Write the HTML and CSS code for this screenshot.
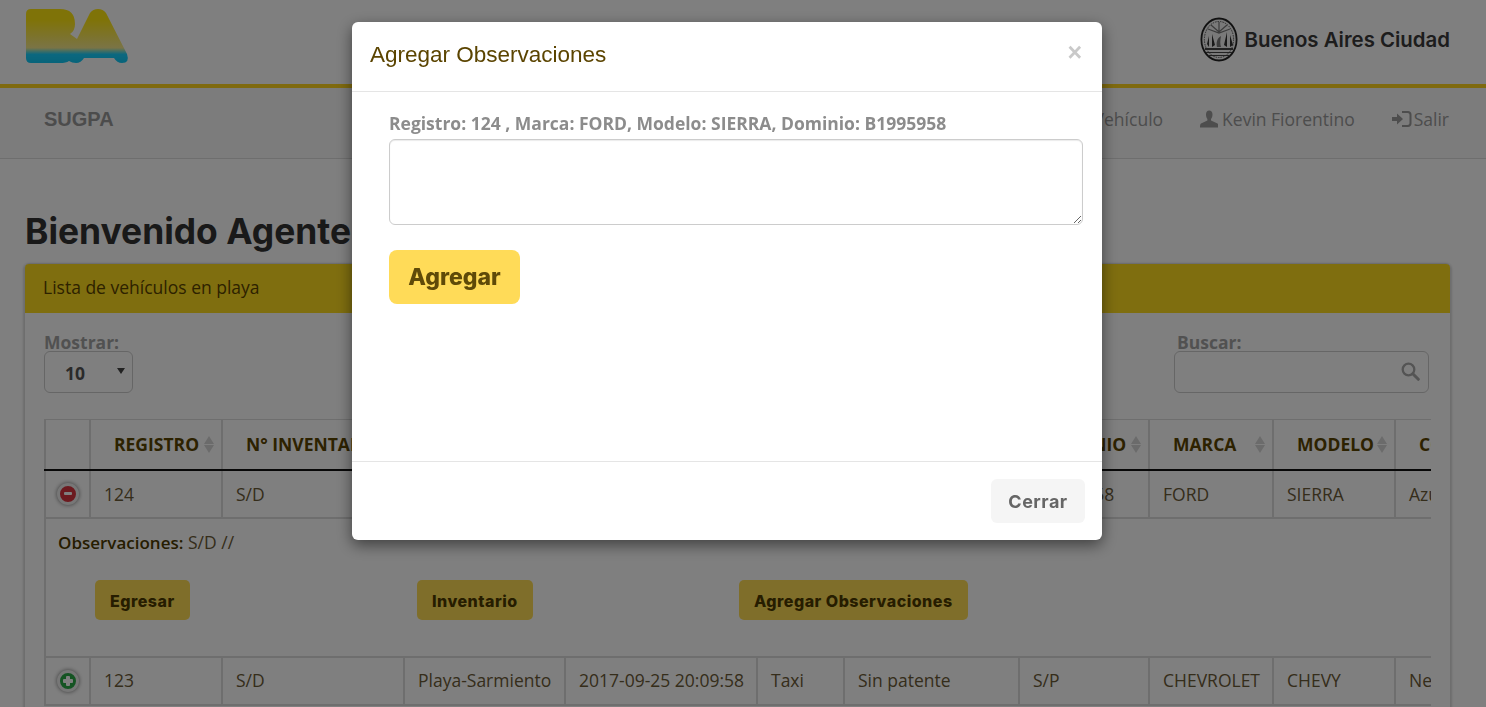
FILE: index.html
```html
<!DOCTYPE html>
<html lang="es">
<head>
<meta charset="utf-8">
<title>SUGPA</title>
<link rel="stylesheet" href="styles.css">
</head>
<body>
<header class="brandbar">
  <svg class="logo" width="104" height="56" viewBox="26 7 104 56" aria-label="BA">
    <defs><linearGradient id="ba" x1="0" y1="0" x2="0" y2="1">
      <stop offset=".2" stop-color="#ffe610"/><stop offset=".72" stop-color="#f5e88c"/><stop offset=".84" stop-color="#18d0ff"/><stop offset="1" stop-color="#10c8f4"/>
    </linearGradient></defs>
    <path fill="url(#ba)" d="M31 8H60Q75 8 75 23Q75 30 70 33L77 38L90 12Q93 8 98 8Q103 8 106 12L127 53Q130 62 122 62Q117 62 114 57H84Q81 62 76 62Q72 62 69 60Q66 62 60 62H31Q26 62 26 57V13Q26 8 31 8Z"/>
  </svg>
  <div class="city">
    <svg class="seal" width="38" height="45" viewBox="0 0 38 45">
      <ellipse cx="19" cy="22.5" rx="17.6" ry="21" fill="#f2f2f2" stroke="#222" stroke-width="1.800"/>
      <ellipse cx="19" cy="22.5" rx="14.6" ry="18" fill="none" stroke="#555" stroke-width="1" stroke-dasharray="1.500 1"/>
      <path d="M8 12L19 16L30 12M11 8L19 15L27 8M19 5V15" stroke="#777" stroke-width="1.200" fill="none"/>
      <path d="M9 30V19L7 27ZM12 30V17L15 28ZM27 30V15L24 28ZM30 30V18L33 28Z" fill="#333"/>
      <path d="M17 30C16 26 17 21 21 19C20 24 20 27 21 30Z" fill="#777"/>
      <path d="M5 31H33V33H5ZM6 35H32V36H6ZM8 38H30V39H8Z" fill="#444"/>
    </svg>
    <span>Buenos Aires Ciudad</span>
  </div>
</header>
<nav class="navbar">
  <span class="brand">SUGPA</span>
  <ul class="navlinks">
    <li>Agregar Vehículo</li>
    <li>
      <svg width="18" height="18" viewBox="0 0 18 18"><path fill="currentColor" d="M6 4.500C6 2 7.300.5 9.200.5S12.500 2 12.500 4.500C12.500 6.500 11.700 8.200 11 9V10.600L17.500 13.500C18.200 14 18.300 15.500 18.300 17.500H0C0 15.500.2 14 1 13.500L7.400 10.600V9C6.700 8.200 6 6.500 6 4.500Z"/></svg>
      Kevin Fiorentino
    </li>
    <li class="tight">
      <svg width="20" height="18" viewBox="0 0 20 18"><path fill="currentColor" d="M0 7H5V3.500L11 9L5 14.500V11H0ZM10 1H16C18 1 19.500 2.500 19.500 4.500V13.500C19.500 15.500 18 17 16 17H10V15H15.500C16.800 15 17.500 14.200 17.500 13V5C17.500 3.800 16.800 3 15.500 3H10Z"/></svg>
      Salir
    </li>
  </ul>
</nav>
<main class="page">
  <h1>Bienvenido Agente</h1>
  <section class="panel">
    <div class="panel-heading">Lista de vehículos en playa</div>
    <div class="panel-body">
      <div class="filters">
        <label class="filter">Mostrar:
          <span class="select-wrap"><select><option>10</option></select></span>
        </label>
        <label class="filter search">Buscar:
          <span class="search-wrap"><input type="text">
            <svg class="search-icon" width="19" height="19" viewBox="0 0 19 19"><circle cx="7.500" cy="7.500" r="5.800" fill="none" stroke="currentColor" stroke-width="2.300"/><path d="M11.800 11.800L17.300 17.300" stroke="currentColor" stroke-width="3" stroke-linecap="round"/></svg>
          </span>
        </label>
      </div>
      <div class="table-wrap">
        <table>
          <colgroup>
            <col class="c0"><col class="c1"><col class="c2"><col class="c3"><col class="c4"><col class="c5"><col class="c6"><col class="c7"><col class="c8"><col class="c9"><col class="c10">
          </colgroup>
          <thead>
            <tr>
              <th></th>
              <th><span class="th-in">REGISTRO<i class="sort"></i></span></th>
              <th><span class="th-in">N° INVENTARIO<i class="sort"></i></span></th>
              <th><span class="th-in">PLAYA<i class="sort"></i></span></th>
              <th><span class="th-in">INGRESO<i class="sort"></i></span></th>
              <th><span class="th-in">TIPO<i class="sort"></i></span></th>
              <th><span class="th-in">MOTIVO<i class="sort"></i></span></th>
              <th><span class="th-in">DOMINIO<i class="sort"></i></span></th>
              <th><span class="th-in">MARCA<i class="sort"></i></span></th>
              <th><span class="th-in">MODELO<i class="sort"></i></span></th>
              <th><span class="th-in">COLOR<i class="sort"></i></span></th>
            </tr>
          </thead>
          <tbody>
            <tr>
              <td class="ctl"><span class="toggle minus"></span></td>
              <td>124</td><td>S/D</td><td>Playa-Sarmiento</td><td>2017-09-25 20:15:12</td><td>Auto</td><td>Sin patente</td><td>B1995958</td><td>FORD</td><td>SIERRA</td><td>Azul</td>
            </tr>
            <tr class="child">
              <td colspan="11">
                <div class="child-in">
                  <p class="obs"><b>Observaciones:</b> S/D //</p>
                  <div class="actions">
                    <span><button class="btn-sm">Egresar</button></span>
                    <span><button class="btn-sm">Inventario</button></span>
                    <span><button class="btn-sm">Agregar Observaciones</button></span>
                  </div>
                </div>
              </td>
            </tr>
            <tr class="last">
              <td class="ctl"><span class="toggle plus"></span></td>
              <td>123</td><td>S/D</td><td>Playa-Sarmiento</td><td>2017-09-25 20:09:58</td><td>Taxi</td><td>Sin patente</td><td>S/P</td><td>CHEVROLET</td><td>CHEVY</td><td>Negro</td>
            </tr>
          </tbody>
        </table>
      </div>
    </div>
  </section>
</main>
<div class="backdrop"></div>
<div class="modal">
  <div class="modal-header">
    <h4>Agregar Observaciones</h4>
    <span class="close">×</span>
  </div>
  <div class="modal-body">
    <label class="reg">Registro: 124 , Marca: FORD, Modelo: SIERRA, Dominio: B1995958</label>
    <textarea></textarea>
    <button class="btn-add">Agregar</button>
  </div>
  <div class="modal-footer"><button class="btn-close">Cerrar</button></div>
</div>
</body>
</html>
```
FILE: styles.css
```css
* { box-sizing: border-box; }
html, body { height: 100%; overflow: hidden; }
body { margin: 0; background: #fff; font-family: "Open Sans", sans-serif; font-size: 17.5px; color: #333; }

.brandbar { height: 88px; border-bottom: 4px solid #ffd51f; display: flex; align-items: flex-start; justify-content: space-between; padding: 8px 36px 0 26px; }
.logo { display: block; }
.city { display: flex; align-items: center; gap: 7px; margin-top: 9px; }
.seal { display: block; }
.city span { font-family: Inter, sans-serif; font-weight: 600; font-size: 20.4px; color: #3a3a3a; }

.navbar { height: 71px; background: #f8f8f8; border-bottom: 1px solid #ddd; display: flex; align-items: center; justify-content: space-between; padding: 0 37px 9px 44px; }
.brand { font-family: "Liberation Sans", sans-serif; font-weight: 700; font-size: 20px; color: #999; margin-top: 2px; }
.navlinks { list-style: none; margin: 0; padding: 0; display: flex; gap: 37px; color: #9a9a9a; font-size: 17.5px; }
.navlinks li { display: flex; align-items: center; gap: 4px; }
.navlinks .tight { gap: 2px; }

.page { padding: 0 35px 0 24px; }
h1 { margin: 52px 0 10px 1px; font-family: Inter, sans-serif; font-weight: 700; font-size: 35.4px; line-height: 42px; color: #333; }

.panel { border: 1px solid #ddd; border-radius: 5px; box-shadow: 0 1px 3px rgba(0,0,0,.3); }
.panel-heading { height: 49px; background: #ffdd1f; border-radius: 4px 4px 0 0; padding: 12px 18px; line-height: 22px; color: #5b4400; }
.panel-body { padding: 18px 19px; }

.filters { display: flex; justify-content: space-between; height: 88px; padding-right: 2px; margin-top: -1px; margin-bottom: 1px; }
.filter { display: flex; flex-direction: column; font-weight: 700; color: #a3a3a3; line-height: 25px; height: 63px; }
.filter.search { text-indent: 3px; }
.select-wrap { position: relative; display: block; width: 89px; height: 42px; margin-top: -4px; }
.select-wrap::after { content: ""; position: absolute; right: 8px; top: 17px; border: 4px solid transparent; border-top: 6px solid #444; border-bottom: 0; }
select { appearance: none; width: 100%; height: 100%; padding: 2px 0 0 20px; background: #fff; border: 1px solid #ccc; border-radius: 6px; font: 700 17.5px "Open Sans", sans-serif; color: #555; }
.search-wrap { position: relative; display: block; width: 255px; height: 42px; margin-top: -4px; text-indent: 0; }
input { width: 100%; height: 100%; border: 1px solid #ccc; border-radius: 6px; background: #fff; }
.search-icon { position: absolute; right: 9px; top: 11px; color: #a8a8a8; }

.table-wrap { overflow: hidden; }
table { border-collapse: collapse; table-layout: fixed; width: 1470px; }
.c0 { width: 45px; } .c1 { width: 132px; } .c2 { width: 182px; } .c3 { width: 161px; } .c4 { width: 192px; } .c5 { width: 87px; } .c6 { width: 175px; } .c7 { width: 130px; } .c8 { width: 124px; } .c9 { width: 122px; } .c10 { width: 120px; }
th, td { border: 2px solid #ddd; text-align: left; white-space: nowrap; overflow: hidden; }
thead tr:first-child th { border-top-width: 1px; }
th { height: 50px; padding: 0 6px 0 0; border-bottom: 2px solid #111; color: #5b4400; font-weight: 700; }
.th-in { display: flex; align-items: center; justify-content: space-between; padding-left: 23px; }
.sort { flex: none; position: relative; width: 11px; height: 17px; margin-left: 2px; }
.sort::before, .sort::after { content: ""; position: absolute; left: 0; border: 5.5px solid transparent; }
.sort::before { top: 0; border-bottom: 8px solid #d6d6d6; border-top: 0; }
.sort::after { bottom: 0; border-top: 8px solid #d6d6d6; border-bottom: 0; }
td { height: 48px; padding: 0 13px; color: #6b5a36; }
.last td { padding-bottom: 2px; }
td.ctl { padding: 0; text-align: center; }
.toggle { display: block; position: relative; width: 22px; height: 22px; margin: 0 auto; border-radius: 50%; box-shadow: 0 0 4px #777; border: 3px solid #eee; }
.toggle::before { content: ""; position: absolute; left: 4px; top: 6.500px; width: 8px; height: 3px; background: #fff; border-radius: 1px; }
.minus { background: #d9343f; }
.plus { background: #2aa847; }
.plus::before { left: 3px; top: 6px; width: 10px; height: 4px; }
.plus::after { content: ""; position: absolute; left: 6px; top: 3px; width: 4px; height: 10px; background: #fff; border-radius: 1px; }
.child td { height: 139px; padding: 0; vertical-align: top; }
.child-in { padding: 12px 12px 0; }
.obs { margin: 0; line-height: 22px; color: #6b5a36; }
.obs b { font-weight: 600; font-size: 17px; color: #4d3a00; }
.actions { display: grid; grid-template-columns: 322px 322px auto; margin: 26px 0 0 37px; }
.btn-sm { height: 40px; padding: 2px 15px 0; border: 0; border-radius: 5px; background: #ffdd55; font: 800 16px Inter, sans-serif; letter-spacing: .5px; color: #4d3a00; }

.backdrop { position: fixed; inset: 0; background: rgba(0,0,0,.5); }
.modal { position: fixed; left: 352px; top: 22px; width: 750px; height: 518px; display: flex; flex-direction: column; background: #fff; border-radius: 6px; box-shadow: 0 5px 15px rgba(0,0,0,.5); }
.modal-header { height: 70px; flex: none; border-bottom: 1px solid #e5e5e5; display: flex; align-items: center; justify-content: space-between; padding: 0 18px; }
h4 { margin: 0 0 3px; font: 400 22.500px "Liberation Sans", sans-serif; color: #5b4400; }
.close { font: 700 25px "Liberation Sans", sans-serif; color: #c9c9c9; margin: 0 2px 9px 0; }
.modal-body { flex: 1; display: flex; flex-direction: column; align-items: flex-start; padding: 19px 19px 0 37px; }
.reg { font-weight: 700; line-height: 24px; color: #8c8c8c; margin-bottom: 4px; }
textarea { display: block; width: 694px; height: 86px; border: 1px solid #ccc; border-radius: 6px; box-shadow: inset 0 1px 1px rgba(0,0,0,.08); background: #fff; }
.btn-add { margin-top: 25px; width: 131px; height: 54px; border: 0; border-radius: 8px; background: #ffdb58; font: 800 23px Inter, sans-serif; color: #5f4a08; }
.modal-footer { height: 79px; flex: none; border-top: 1px solid #e5e5e5; display: flex; justify-content: flex-end; padding: 17px 17px 0 0; }
.btn-close { width: 94px; height: 44px; padding: 1px 0 0; border: 0; border-radius: 6px; background: #f5f5f5; font: 700 18px Inter, sans-serif; letter-spacing: .5px; color: #666; }
```
